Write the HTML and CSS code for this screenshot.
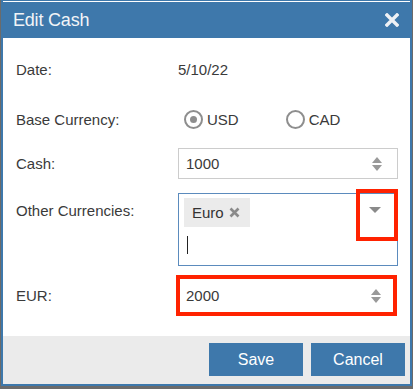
FILE: index.html
```html
<!DOCTYPE html>
<html>
<head>
    <meta charset="UTF-8">
    <title>Edit Cash</title>
    <link rel="stylesheet" href="styles.css">
</head>
<body>

<div class="dialog">
    <!-- Заголовок -->
    <div class="dialog-header">
        <span class="dialog-title">Edit Cash</span>
        <svg class="close" width="14" height="14" viewBox="0 0 14 14">
            <path d="M2 2 L12 12 M12 2 L2 12" stroke="#eef1f5" stroke-width="3.4" stroke-linecap="square"/>
        </svg>
    </div>

    <div class="dialog-body">
        <div class="row row-date">
            <div class="label">Date:</div>
            <div class="value">5/10/22</div>
        </div>

        <div class="row row-base">
            <div class="label">Base Currency:</div>
            <div class="value radios">
                <label class="radio"><span class="circle checked"></span>USD</label>
                <label class="radio"><span class="circle"></span>CAD</label>
            </div>
        </div>

        <div class="row row-cash">
            <div class="label">Cash:</div>
            <div class="numeric">
                <span class="num-text">1000</span>
                <span class="spin"><i class="up"></i><i class="down"></i></span>
            </div>
        </div>

        <div class="row row-other">
            <div class="label">Other Currencies:</div>
            <div class="multiselect">
                <div class="tags">
                    <span class="tag">Euro
                        <svg class="tag-x" width="11" height="11" viewBox="0 0 11 11">
                            <path d="M1.5 1.5 L9.5 9.5 M9.5 1.5 L1.5 9.5" stroke="#8a8a8a" stroke-width="2.6"/>
                        </svg>
                    </span>
                </div>
                <div class="caret-line"></div>
                <span class="drop-arrow"></span>
                <!-- выделение -->
                <div class="highlight hl-arrow"></div>
            </div>
        </div>

        <div class="row row-eur">
            <div class="label">EUR:</div>
            <div class="numeric highlighted">
                <span class="num-text">2000</span>
                <span class="spin"><i class="up"></i><i class="down"></i></span>
            </div>
        </div>
    </div>

    <div class="dialog-footer">
        <button class="btn">Save</button>
        <button class="btn">Cancel</button>
    </div>
</div>

</body>
</html>
```

FILE: styles.css
```css
html, body {
    margin: 0;
    padding: 0;
}
body {
    font-family: "Liberation Sans", Arial, sans-serif;
    background-color: #6b6b6b;
    width: 413px;
    height: 389px;
    overflow: hidden;
}
.dialog {
    width: 407px;
    margin-left: 1px;
    border: 2px solid #3e78ab;
    border-top: 1px solid #3e78ab;
    background-color: #fff;
}
.dialog-header {
    border-top: 1px solid #fff;
    background-color: #3e78ab;
    height: 36px;
    display: flex;
    align-items: center;
    justify-content: space-between;
    padding: 0 11px 0 10px;
    color: #f2f4f7;
}
.dialog-title {
    font-size: 18px;
    letter-spacing: -0.2px;
}
.close {
    display: block;
}
.dialog-body {
    padding: 16px 0 20px 13px;
    color: #3a3a3a;
    font-size: 15px;
}
.row {
    display: flex;
    align-items: center;
}
.label {
    width: 162px;
    flex-shrink: 0;
}
.row-date {
    height: 30px;
}
.row-base {
    height: 30px;
    margin-top: 20px;
}
.row-cash {
    margin-top: 14px;
}
.row-other {
    margin-top: 14px;
    align-items: flex-start;
}
.row-other .label {
    margin-top: 9px;
}
.row-eur {
    margin-top: 9px;
}
.radios {
    display: flex;
    align-items: center;
    margin-left: 6px;
}
.radio {
    display: flex;
    align-items: center;
    margin-right: 47px;
}
.circle {
    width: 15px;
    height: 15px;
    border: 2px solid #8e8e8e;
    border-radius: 50%;
    margin-right: 4px;
    display: flex;
    align-items: center;
    justify-content: center;
}
.circle.checked::after {
    content: "";
    width: 7px;
    height: 7px;
    border-radius: 50%;
    background-color: #8e8e8e;
}
.numeric {
    height: 29px;
    border: 1px solid #ccc;
    display: flex;
    align-items: center;
    justify-content: space-between;
    padding: 0 0 0 7px;
    width: 211px;
}
.spin {
    display: flex;
    flex-direction: column;
    margin-right: 15px;
}
.spin i {
    width: 0;
    height: 0;
    border-left: 5.5px solid transparent;
    border-right: 5.5px solid transparent;
}
.spin .up {
    border-bottom: 6px solid #999;
    margin-bottom: 2px;
}
.spin .down {
    border-top: 6px solid #999;
}
.highlighted {
    border: 4px solid #ff2200;
    margin-left: -2px;
    height: 33px;
    width: 207px;
    padding-left: 6px;
}
.highlighted .spin {
    margin-right: 12px;
}
.multiselect {
    position: relative;
    border: 1px solid #5b8bbd;
    padding: 4px 0 0 5px;
    box-sizing: border-box;
    width: 220px;
    height: 73px;
}
.tag {
    display: inline-flex;
    align-items: center;
    background-color: #ebebeb;
    padding: 6px 10px 6px 8px;
    color: #333;
}
.tag-x {
    margin-left: 5px;
}
.caret-line {
    width: 1px;
    height: 18px;
    background-color: #222;
    margin: 9px 0 0 3px;
}
.drop-arrow {
    position: absolute;
    right: 16px;
    top: 13px;
    width: 0;
    height: 0;
    border-left: 6px solid transparent;
    border-right: 6px solid transparent;
    border-top: 6px solid #8a8a8a;
}
.highlight {
    position: absolute;
    border: 4px solid #ff2200;
    box-sizing: border-box;
}
.hl-arrow {
    right: -1px;
    top: -5px;
    width: 42px;
    height: 52px;
}
.dialog-footer {
    background-color: #ebebeb;
    height: 48px;
    display: flex;
    justify-content: flex-end;
    align-items: flex-start;
    gap: 8px;
    padding-right: 5px;
}
.btn {
    font-family: "Liberation Sans", Arial, sans-serif;
    font-size: 16px;
    color: #fff;
    background-color: #3e78ab;
    border: none;
    width: 94px;
    height: 33px;
    margin-top: 7px;
}
```
